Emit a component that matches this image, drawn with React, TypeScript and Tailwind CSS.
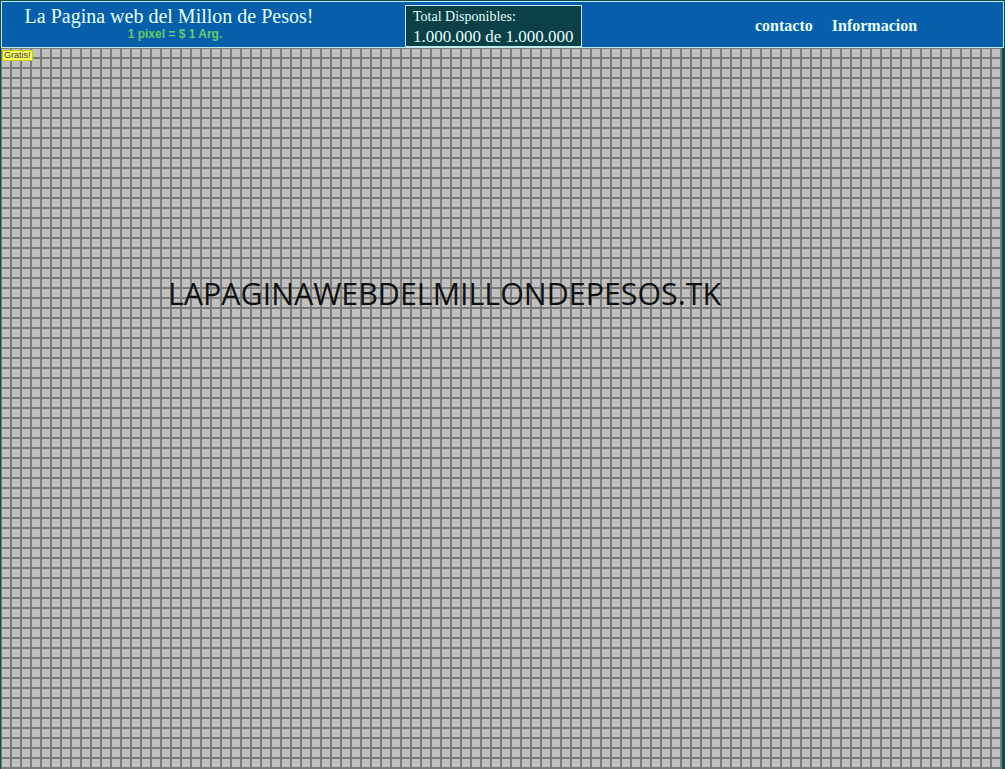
import React from 'react';

const gridBg =
  'bg-[#c0c0c0] bg-[linear-gradient(90deg,#7c7c7c_1px,transparent_1px,transparent_9px,#7c7c7c_9px),linear-gradient(#7c7c7c_1px,transparent_1px,transparent_9px,#7c7c7c_9px)] [background-size:10px_10px]';

export default function App() {
  return (
    <div className="w-[1005px] bg-[#0f4a50] p-px">
      {/* Header */}
      <div className="flex h-[47px] items-center border border-[#bfeaea] bg-[#075eab] font-['Liberation_Serif',serif] text-[#e6ffff]">
        <div className="-mt-[3px] w-[334px] text-center leading-none">
          <div className="text-[20px]">La Pagina web del Millon de Pesos!</div>
          <div className="mt-[2px] pl-[12px] font-['Liberation_Sans',sans-serif] text-[12px] font-bold text-[#66cc66]">
            1 pixel = $ 1 Arg.
          </div>
        </div>
        <div className="ml-[69px] mt-[3px] h-[42px] w-[177px] self-start whitespace-nowrap border border-[#bfeaea] bg-[#0b4047] px-[7px] pt-[4px] leading-none">
          <div className="text-[14px]">Total Disponibles:</div>
          <div className="mt-[4px] text-[17px]">1.000.000 de 1.000.000</div>
        </div>
        <nav className="ml-[173px] mt-[3px] flex gap-[19px] text-[16px] font-bold">
          <a href="#">contacto</a>
          <a href="#">Informacion</a>
        </nav>
      </div>

      {/* Pixel grid */}
      <div className={`relative h-[1000px] w-[1001px] ${gridBg}`}>
        <span className="absolute left-px top-[2px] border border-[#c8c800] bg-[#ffff66] px-px font-['Liberation_Sans',sans-serif] text-[9px] leading-[9px] text-[#333]">
          Gratis!
        </span>
        <div className="absolute left-[167px] top-[231px] font-['Open_Sans',sans-serif] text-[30.4px] leading-none text-[#111]">
          LAPAGINAWEBDELMILLONDEPESOS.TK
        </div>
      </div>
    </div>
  );
}
